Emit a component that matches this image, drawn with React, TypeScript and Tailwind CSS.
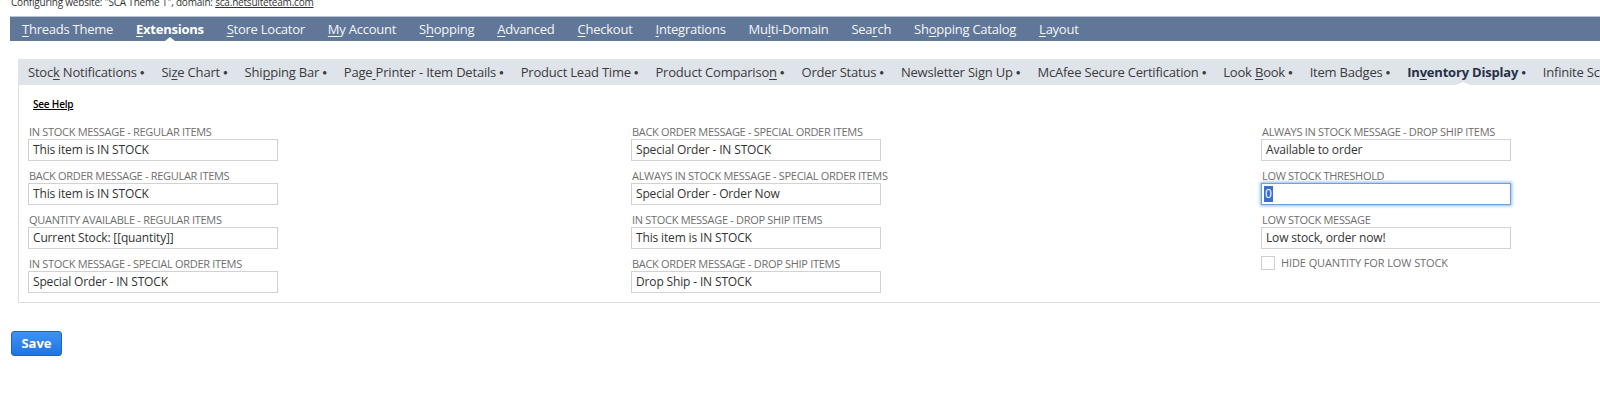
import React from 'react'

const font = { fontFamily: '"Open Sans", "Liberation Sans", sans-serif' }

// label + access-key letter index
const mainTabs: [string, number][] = [
  ['Threads Theme', 0],
  ['Extensions', 0],
  ['Store Locator', 0],
  ['My Account', 0],
  ['Shopping', 1],
  ['Advanced', 0],
  ['Checkout', 0],
  ['Integrations', 0],
  ['Multi-Domain', 2],
  ['Search', 3],
  ['Shopping Catalog', 2],
  ['Layout', 0],
]

const subTabs: [string, number][] = [
  ['Stock Notifications', 4],
  ['Size Chart', 2],
  ['Shipping Bar', 3],
  ['Page Printer - Item Details', 4],
  ['Product Lead Time', -1],
  ['Product Comparison', 17],
  ['Order Status', -1],
  ['Newsletter Sign Up', -1],
  ['McAfee Secure Certification', -1],
  ['Look Book', 5],
  ['Item Badges', -1],
  ['Inventory Display', 2],
  ['Infinite Scroll', -1],
]

function Keyed({ text, idx }: { text: string; idx: number }) {
  if (idx < 0) return <>{text}</>
  return (
    <>
      {text.slice(0, idx)}
      <span className="underline underline-offset-2">{text[idx]}</span>
      {text.slice(idx + 1)}
    </>
  )
}

type Field = { label: string; value: string; focus?: boolean }

const columns: Field[][] = [
  [
    { label: 'In Stock Message - Regular Items', value: 'This item is IN STOCK' },
    { label: 'Back Order Message - Regular Items', value: 'This item is IN STOCK' },
    { label: 'Quantity Available - Regular Items', value: 'Current Stock: [[quantity]]' },
    { label: 'In Stock Message - Special Order Items', value: 'Special Order - IN STOCK' },
  ],
  [
    { label: 'Back Order Message - Special Order Items', value: 'Special Order - IN STOCK' },
    { label: 'Always In Stock Message - Special Order Items', value: 'Special Order - Order Now' },
    { label: 'In Stock Message - Drop Ship Items', value: 'This item is IN STOCK' },
    { label: 'Back Order Message - Drop Ship Items', value: 'Drop Ship - IN STOCK' },
  ],
  [
    { label: 'Always In Stock Message - Drop Ship Items', value: 'Available to order' },
    { label: 'Low Stock Threshold', value: '0', focus: true },
    { label: 'Low Stock Message', value: 'Low stock, order now!' },
  ],
]

function FieldBox({ f }: { f: Field }) {
  return (
    <div className="mb-2">
      <div className="h-[14px] pl-[1px] text-[11px] leading-[14px] tracking-[-0.3px] uppercase text-[#6f6f6f]">{f.label}</div>
      {f.focus ? (
        <div className="w-[250px] h-[22px] border border-[#6ea2df] shadow-[0_0_3px_1px_#8fbaf0] flex items-center pl-[2px] bg-white">
          <span className="bg-[#3a6fd6] text-white text-[12px] leading-[16px] px-[1px]">{f.value}</span>
        </div>
      ) : (
        <div className="w-[250px] h-[22px] border border-[#d2d2d2] flex items-center pl-[4px] text-[12px] tracking-[-0.15px] text-[#333] bg-white">
          {f.value}
        </div>
      )}
    </div>
  )
}

export default function App() {
  return (
    <div className="w-[1600px] h-[397px] bg-white overflow-hidden" style={font}>
      {/* Config line, cut off at top */}
      <div className="h-[16px] overflow-hidden">
        <div className="pl-[11px] -mt-[4px] text-[10px] leading-[12px] tracking-[-0.2px] text-[#333]">
          Configuring website: "SCA Theme 1", domain: <span className="underline">sca.netsuiteteam.com</span>
        </div>
      </div>

      {/* Main tabs */}
      <div className="ml-[10px] h-[25px] bg-[#607799] border-t border-[#b9c4d3] flex items-center pl-[12px] gap-[23px] text-[13px] tracking-[-0.25px] text-[#f3f5f8] whitespace-nowrap">
        {mainTabs.map(([t, k]) => (
          <div key={t} className={`relative leading-[24px] ${t === 'Extensions' ? 'font-bold text-white' : ''}`}>
            <Keyed text={t} idx={k} />
            {t === 'Extensions' && (
              <span className="absolute left-1/2 -translate-x-1/2 bottom-0 w-0 h-0 border-x-[5px] border-x-transparent border-b-[4px] border-b-white" />
            )}
          </div>
        ))}
      </div>

      {/* Sub tabs */}
      <div className="ml-[18px] mt-[18px] h-[26px] bg-[#dfe3ea] flex items-center pl-[10px] gap-[17px] text-[13px] tracking-[-0.2px] text-[#3c3c3c] whitespace-nowrap overflow-hidden">
        {subTabs.map(([t, k]) => (
          <div key={t} className={`relative leading-[26px] ${t === 'Inventory Display' ? 'font-bold text-[#263246]' : ''}`}>
            <Keyed text={t} idx={k} />
            {t !== 'Infinite Scroll' && <span className="text-[8px] ml-[3px] align-[2px]">●</span>}
            {t === 'Inventory Display' && (
              <span className="absolute left-[49px] bottom-0 w-0 h-0 border-x-[7px] border-x-transparent border-b-[3px] border-b-white" />
            )}
          </div>
        ))}
      </div>

      {/* Content panel */}
      <div className="ml-[18px] border-l border-b border-[#dcdcdc] pl-[9px] pb-[1px]">
        <div className="pt-[5px] pl-[5px] h-[40px]">
          <span className="text-[10px] leading-[12px] tracking-[-0.2px] font-semibold text-black underline">See Help</span>
        </div>
        <div className="flex">
          <div className="w-[603px]">
            {columns[0].map((f) => <FieldBox key={f.label} f={f} />)}
          </div>
          <div className="w-[630px]">
            {columns[1].map((f) => <FieldBox key={f.label} f={f} />)}
          </div>
          <div>
            {columns[2].map((f) => <FieldBox key={f.label} f={f} />)}
            <div className="flex items-center gap-[6px] -mt-[2px]">
              <div className="w-[14px] h-[14px] border border-[#cfcfcf] bg-white" />
              <span className="text-[11px] tracking-[-0.1px] uppercase text-[#6f6f6f]">Hide Quantity for Low Stock</span>
            </div>
          </div>
        </div>
      </div>

      {/* Save */}
      <div className="pl-[11px] pt-[27px]">
        <button className="w-[51px] h-[25px] rounded-[3px] border border-[#1d63c6] bg-gradient-to-b from-[#3f92f2] to-[#1f74e6] text-white text-[13px] font-bold leading-none">
          Save
        </button>
      </div>
    </div>
  )
}
